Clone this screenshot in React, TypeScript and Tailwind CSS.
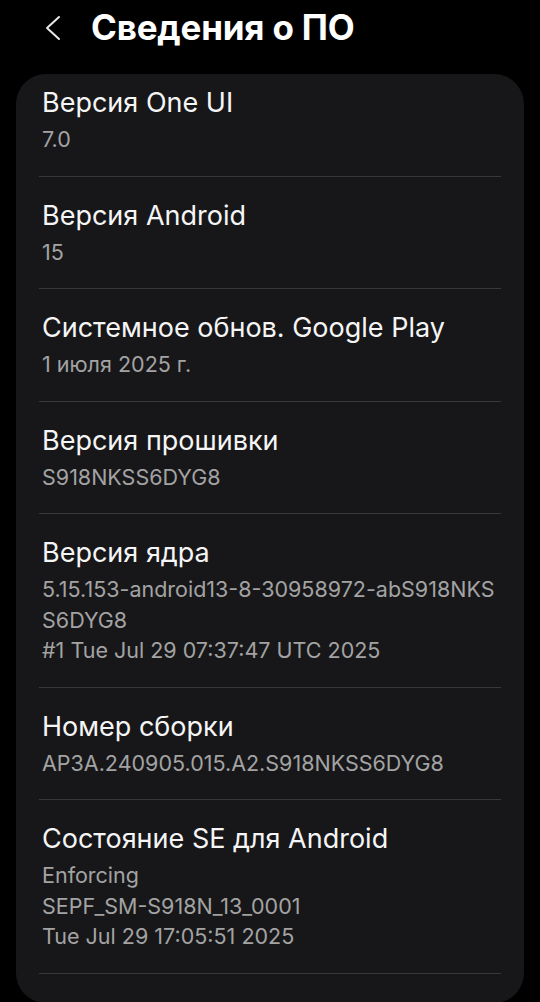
type Row = { title: string; lines: string[] };

const rows: Row[] = [
  { title: "Версия One UI", lines: ["7.0"] },
  { title: "Версия Android", lines: ["15"] },
  { title: "Системное обнов. Google Play", lines: ["1 июля 2025 г."] },
  { title: "Версия прошивки", lines: ["S918NKSS6DYG8"] },
  {
    title: "Версия ядра",
    lines: [
      "5.15.153-android13-8-30958972-abS918NKS",
      "S6DYG8",
      "#1 Tue Jul 29 07:37:47 UTC 2025",
    ],
  },
  { title: "Номер сборки", lines: ["AP3A.240905.015.A2.S918NKSS6DYG8"] },
  {
    title: "Состояние SE для Android",
    lines: ["Enforcing", "SEPF_SM-S918N_13_0001", "Tue Jul 29 17:05:51 2025"],
  },
];

export default function App() {
  return (
    <div
      className="min-h-[1002px] w-[540px] bg-black text-[#f5f5f5]"
      style={{ fontFamily: "Inter, 'Noto Sans', sans-serif" }}
    >
      {/* Header */}
      <div className="flex h-[74px] items-center pb-[20px]">
        <svg
          className="ml-[44px] mt-[2px]"
          width="18"
          height="26"
          viewBox="0 0 18 26"
          fill="none"
        >
          <path
            d="M15 2 L3 13 L15 24"
            stroke="#e8e8e8"
            strokeWidth="2"
            strokeLinecap="round"
            strokeLinejoin="round"
          />
        </svg>
        <h1 className="ml-[29px] text-[35px] font-bold leading-none tracking-[-0.2px] text-white">
          Сведения о ПО
        </h1>
      </div>

      {/* Card */}
      <div className="mx-[16px] rounded-[30px] bg-[#171719] pb-[29px]">
        {rows.map((row, i) => (
          <div
            key={row.title}
            className={`mx-[23px] border-b border-[#38383a] px-[3px] pb-[21px] ${
              i === 0 ? "pt-[11px]" : "pt-[21px]"
            }`}
          >
            <div className="text-[27px] leading-[36px]">{row.title}</div>
            <div className="mt-[3px] text-[21.5px] leading-[30.5px] text-[#a3a3a3]">
              {row.lines.map((l) => (
                <div key={l}>{l}</div>
              ))}
            </div>
          </div>
        ))}
      </div>
    </div>
  );
}
